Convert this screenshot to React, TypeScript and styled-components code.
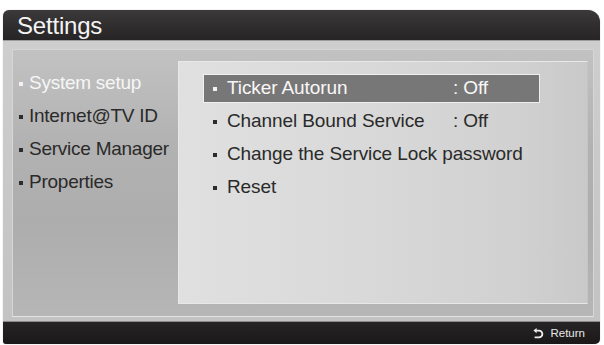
import React from 'react'
import styled, { createGlobalStyle } from 'styled-components'

const GlobalStyle = createGlobalStyle`
  html, body {
    margin: 0;
    padding: 0;
    background: #ffffff;
  }
  body {
    font-family: "Liberation Sans", Arial, sans-serif;
  }
`

const Frame = styled.div`
  margin: 10px 4px 1px 3px;
  width: 597px;
  height: 334px;
  border-radius: 6px 12px 5px 3px;
  overflow: hidden;
  display: flex;
  flex-direction: column;
  background: linear-gradient(180deg, #cfcfcf 0%, #c2c2c2 100%);
  box-shadow: 0 0 1px rgba(0, 0, 0, 0.4);
`

const Header = styled.div`
  height: 30px;
  flex: none;
  display: flex;
  align-items: center;
  padding-left: 14px;
  background: linear-gradient(180deg, #3b3939 0%, #2f2d2d 55%, #262424 100%);
`

const Title = styled.h1`
  margin: 0;
  font-size: 24px;
  font-weight: normal;
  color: #f4f4f4;
  letter-spacing: -0.2px;
  line-height: 1;
  padding-top: 2px;
`

const Body = styled.div`
  flex: 1;
  padding: 8px 6px 4px 9px;
  display: flex;
  border-top: 1px solid #9c9c9c;
`

const Content = styled.div`
  flex: 1;
  display: flex;
  border: 1px solid #d6d6d6;
  border-bottom-color: #e4e4e4;
  background: linear-gradient(180deg, #c2c2c2 0%, #b2b2b2 35%, #adadad 65%, #b6b6b6 100%);
`

const Menu = styled.ul`
  list-style: none;
  margin: 0;
  padding: 16px 0 0 6px;
  width: 159px;
  flex: none;
`

const Bullet = styled.span<{ $light?: boolean; $gap?: number }>`
  display: inline-block;
  flex: none;
  width: 4px;
  height: 4px;
  margin-right: ${p => p.$gap ?? 7}px;
  background: ${p => (p.$light ? '#f2f2f2' : '#2c2c2c')};
  transform: translateY(1px);
`

const MenuItem = styled.li<{ $active?: boolean }>`
  height: 33px;
  display: flex;
  align-items: center;
  font-size: 19px;
  letter-spacing: -0.25px;
  color: ${p => (p.$active ? '#f6f6f6' : '#2a2a2a')};
  white-space: nowrap;
`

const Panel = styled.div`
  flex: 1;
  margin: 11px 5px 12px 0;
  padding: 12px 0 0 24px;
  border: 1px solid #e8e8e8;
  border-right-color: #c4c4c4;
  background: linear-gradient(90deg, #e0e0e0 0%, #d9d9d9 45%, #d0d0d0 85%, #c9c9c9 100%);
`

const Options = styled.ul`
  list-style: none;
  margin: 0;
  padding: 0;
  display: flex;
  flex-direction: column;
  gap: 4px;
`

const Option = styled.li<{ $active?: boolean }>`
  width: 337px;
  height: 29px;
  box-sizing: border-box;
  display: flex;
  align-items: center;
  padding: 0 0 1px 9px;
  font-size: 19px;
  letter-spacing: -0.1px;
  white-space: nowrap;
  color: ${p => (p.$active ? '#f8f8f8' : '#2a2a2a')};
  background: ${p => (p.$active ? '#787777' : 'transparent')};
  border: 1px solid ${p => (p.$active ? '#efefef' : 'transparent')};
`

const Label = styled.span`
  width: 226px;
  flex: none;
`

const Value = styled.span`
  flex: none;
`

const Footer = styled.div`
  height: 22px;
  flex: none;
  display: flex;
  align-items: center;
  justify-content: flex-end;
  padding-right: 15px;
  background: linear-gradient(180deg, #262424 0%, #1a1818 100%);
  border-top: 1px solid #8a8a8a;
`

const ReturnHint = styled.span`
  display: flex;
  align-items: center;
  gap: 6px;
  font-size: 11.5px;
  color: #e8e8e8;
`

const ReturnIcon = () => (
  <svg width="11" height="11" viewBox="0 0 11 11">
    <path d="M3 2.6 H6 A3.4 3.4 0 0 1 6 9.4 H1.6" fill="none" stroke="#ececec" strokeWidth="1.8" />
    <path d="M0.4 2.6 L3.6 0 V5.2 Z" fill="#ececec" />
  </svg>
)

const menu = ['System setup', 'Internet@TV ID', 'Service Manager', 'Properties']

const options = [
  { label: 'Ticker Autorun', value: ': Off' },
  { label: 'Channel Bound Service', value: ': Off' },
  { label: 'Change the Service Lock password' },
  { label: 'Reset' },
]

export default function App() {
  return (
    <>
      <GlobalStyle />
      <Frame>
        <Header>
          <Title>Settings</Title>
        </Header>
        <Body>
          <Content>
            <Menu>
              {menu.map((m, i) => (
                <MenuItem key={m} $active={i === 0}>
                  <Bullet $light={i === 0} $gap={6} />
                  {m}
                </MenuItem>
              ))}
            </Menu>
            <Panel>
              <Options>
                {options.map((o, i) => (
                  <Option key={o.label} $active={i === 0}>
                    <Bullet $light={i === 0} $gap={10} />
                    {o.value ? <Label>{o.label}</Label> : o.label}
                    {o.value ? <Value>{o.value}</Value> : null}
                  </Option>
                ))}
              </Options>
            </Panel>
          </Content>
        </Body>
        <Footer>
          <ReturnHint>
            <ReturnIcon />
            Return
          </ReturnHint>
        </Footer>
      </Frame>
    </>
  )
}
